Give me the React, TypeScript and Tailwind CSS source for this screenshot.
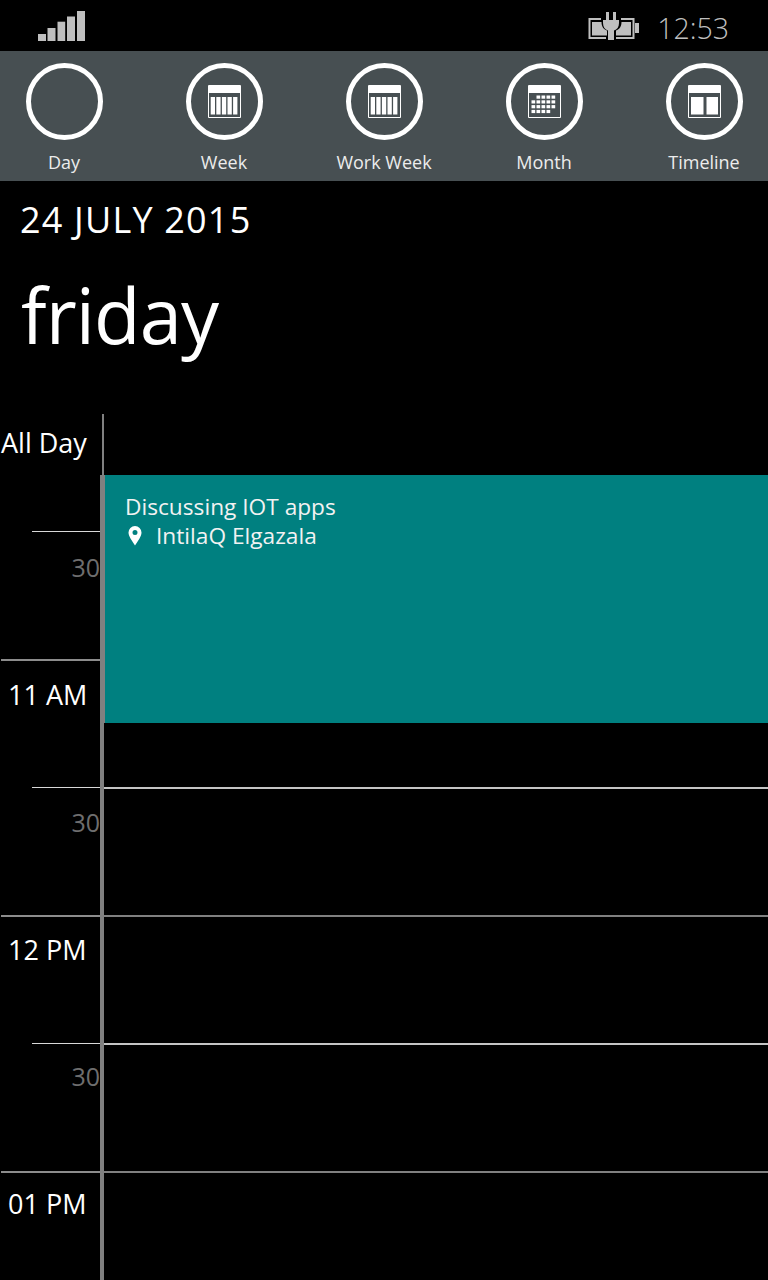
const font = "font-['Open_Sans','Noto_Sans',sans-serif]";

function Signal() {
  return (
    <svg width="48" height="32" viewBox="0 0 48 32" className="mt-[11px] ml-[38px] block">
      <g fill="#bfbfbf">
        <rect x="0" y="23" width="8" height="7" />
        <rect x="9.500" y="17" width="8" height="13" />
        <rect x="19.500" y="10.700" width="7.700" height="19.300" />
        <rect x="29" y="5.500" width="8" height="24.500" />
        <rect x="39" y="0" width="8" height="30" />
      </g>
    </svg>
  );
}

function Battery() {
  return (
    <svg width="52" height="28" viewBox="0 0 52 28" className="block">
      <path d="M13 7H1.500v19H18M28 26h17.500V7H33" fill="none" stroke="#bfbfbf" strokeWidth="2" />
      <rect x="47" y="11" width="4" height="10" fill="#bfbfbf" />
      <path d="M4 10h9.500c0 4 2 7.500 5.500 8.500V23.500H4z" fill="#bfbfbf" />
      <path d="M43 10h-9.500c0 4-2 7.500-5.500 8.500V23.500h15z" fill="#bfbfbf" />
      <path d="M15 8h16v3c0 4-2 6.500-5 7.500V28h-6v-9.500c-3-1-5-3.500-5-7.500z" fill="#bfbfbf" />
      <rect x="18" y="0" width="3" height="8" fill="#bfbfbf" />
      <rect x="25" y="0" width="3" height="8" fill="#bfbfbf" />
    </svg>
  );
}

function CalIcon({ kind }: { kind: "week" | "month" | "timeline" }) {
  return (
    <svg width="33" height="33" viewBox="0 0 33 33" className="block">
      <path d="M0 1a1 1 0 0 1 1-1h31a1 1 0 0 1 1 1v31a1 1 0 0 1-1 1H1a1 1 0 0 1-1-1z" fill="#fff" />
      <rect x="1" y="8" width="31" height="24" fill="#474f52" />
      {kind === "week" &&
        [2.7, 8.300, 13.900, 19.500, 25.100].map((x) => (
          <rect key={x} x={x} y="12" width="4.300" height="17.500" fill="#fff" />
        ))}
      {kind === "month" &&
        [10.500, 15.300, 20.100, 24.900].flatMap((y, r) =>
          [3.500, 8.500, 13.500, 18.500, 23.500].map((x, c) =>
            (r === 0 && c < 1) || (r === 3 && c > 3) ? null : (
              <rect key={`${x}-${y}`} x={x} y={y} width="3.700" height="3.200" fill="#fff" />
            ),
          ),
        )}
      {kind === "timeline" && (
        <>
          <rect x="3" y="12" width="12.500" height="17.500" fill="#fff" />
          <rect x="18.500" y="12" width="11.500" height="17.500" fill="#fff" />
        </>
      )}
    </svg>
  );
}

function Tab({ label, kind }: { label: string; kind?: "week" | "month" | "timeline" }) {
  return (
    <div className="flex w-[160px] shrink-0 flex-col items-center">
      <div className="flex h-[77px] w-[77px] items-center justify-center rounded-full border-[5px] border-white">
        {kind && <CalIcon kind={kind} />}
      </div>
      <div className="mt-[10px] text-[18px] leading-[24px] whitespace-nowrap text-[#ececec]">{label}</div>
    </div>
  );
}

function Row({ label, half, first, gap }: { label: string; half?: boolean; first?: boolean; gap: string }) {
  return (
    <div className="flex h-[128px]">
      <div className="w-[100px]">
        <div className={half ? "mb-[1px] ml-[32px] h-[1px] bg-[#d8d8d8]" : "ml-[1px] h-[2px] bg-[#8c8c8c]"} />
        <div
          className={`${gap} ${
            half
              ? "text-right text-[25px] leading-[36px] text-[#6e6e6e]"
              : "pl-[8px] text-[27px] leading-[36px] text-white"
          }`}
        >
          {label}
        </div>
      </div>
      <div className="w-[4px] bg-[#808080]" />
      <div className={`h-[2px] flex-1 ${first ? "" : half ? "bg-[#c4c4c4]" : "bg-[#808080]"}`} />
    </div>
  );
}

export default function App() {
  return (
    <div className={`relative h-[1280px] w-[768px] overflow-hidden bg-black ${font}`}>
      <div className="flex h-[51px] items-start justify-between">
        <Signal />
        <div className="mt-[12px] mr-[39px] flex items-start gap-[17px]">
          <Battery />
          <span className="-mt-[3px] text-[28.500px] leading-[38px] font-light text-[#bfbfbf]">12:53</span>
        </div>
      </div>
      <div className="h-[130px] bg-[#474f52] pt-[12px]">
        <div className="-ml-[16px] flex">
          <Tab label="Day" />
          <Tab label="Week" kind="week" />
          <Tab label="Work Week" kind="week" />
          <Tab label="Month" kind="month" />
          <Tab label="Timeline" kind="timeline" />
        </div>
      </div>
      <div className="h-[233px] pl-[20px]">
        <div className="pt-[16px] text-[36px] leading-[46px] tracking-[1.200px] text-white">24 JULY 2015</div>
        <div className="mt-[22px] ml-[1px] text-[76px] leading-[100px] tracking-[-0.900px] text-white">friday</div>
      </div>
      <div className="flex h-[61px]">
        <div className="w-[100px] pt-[11px] pl-[1px] text-[27px] leading-[36px] text-white">All Day</div>
        <div className="ml-[2px] w-[2px] bg-[#808080]" />
      </div>
      <div className="relative">
        <div className="flex h-[56px]">
          <div className="w-[100px]" />
          <div className="w-[4px] bg-[#808080]" />
        </div>
        <Row label="30" half first gap="mt-[17px]" />
        <Row label="11 AM" gap="mt-[16px]" />
        <Row label="30" half gap="mt-[16px]" />
        <Row label="12 PM" gap="mt-[15px]" />
        <Row label="30" half gap="mt-[14px]" />
        <Row label="01 PM" gap="mt-[13px]" />
        <div className="absolute top-0 right-0 left-[100px] h-[248px] border-l-[5px] border-[#808080] bg-[#008080] pt-[17px] pl-[20px] text-[22.700px] leading-[29px] text-[#f2f2f2]">
          <div>Discussing IOT apps</div>
          <div className="flex items-center">
            <svg width="14" height="20" viewBox="0 0 14 20" className="mr-[14px] ml-[3px] block">
              <path
                fillRule="evenodd"
                d="M7 0a6.500 6.500 0 0 1 6.500 6.500C13.500 10 10 15 7 19.500 4 15 .5 10 .5 6.500A6.500 6.500 0 0 1 7 0zm0 4a2.500 2.500 0 1 0 0 5 2.500 2.500 0 0 0 0-5z"
                fill="#fff"
              />
            </svg>
            <span>IntilaQ Elgazala</span>
          </div>
        </div>
      </div>
    </div>
  );
}
